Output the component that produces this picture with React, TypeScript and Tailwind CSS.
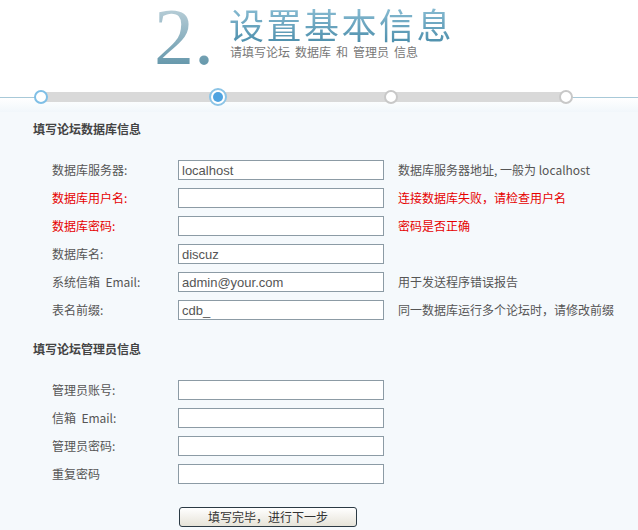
import React from "react";

const cjk = { fontFamily: '"Noto Sans CJK SC", "Noto Sans", sans-serif' };
const latin = { fontFamily: '"Liberation Sans", "Noto Sans CJK SC", sans-serif' };

type Row = { label: string; value?: string; hint?: string; error?: boolean };

const dbRows: Row[] = [
  { label: "数据库服务器:", value: "localhost", hint: "数据库服务器地址, 一般为 localhost" },
  { label: "数据库用户名:", error: true, hint: "连接数据库失败，请检查用户名" },
  { label: "数据库密码:", error: true, hint: "密码是否正确" },
  { label: "数据库名:", value: "discuz" },
  { label: "系统信箱  Email:", value: "admin@your.com", hint: "用于发送程序错误报告" },
  { label: "表名前缀:", value: "cdb_", hint: "同一数据库运行多个论坛时，请修改前缀" },
];

const adminRows: Row[] = [
  { label: "管理员账号:" },
  { label: "信箱  Email:" },
  { label: "管理员密码:" },
  { label: "重复密码" },
];

const FormRow = ({ row }: { row: Row }) => (
  <div className="flex items-center h-[28px] pl-[52px]">
    <div
      className={`w-[126px] text-[12px] whitespace-pre ${row.error ? "text-[#e60000]" : "text-[#555]"}`}
      style={cjk}
    >
      {row.label}
    </div>
    <input
      className="w-[206px] h-[20px] border border-[#8c9ba5] bg-white px-[3px] text-[13px] text-[#555] outline-none"
      style={latin}
      defaultValue={row.value ?? ""}
    />
    {row.hint && (
      <div
        className={`ml-[14px] text-[12px] ${row.error ? "text-[#e60000]" : "text-[#555]"}`}
        style={cjk}
      >
        {row.hint}
      </div>
    )}
  </div>
);

const Dot = ({ kind }: { kind: "done" | "active" | "todo" }) => {
  if (kind === "active")
    return (
      <div className="w-[18px] h-[18px] rounded-full bg-white border-2 border-[#8cc4e6] flex items-center justify-center">
        <div className="w-[10px] h-[10px] rounded-full bg-[#4fa3e0]" />
      </div>
    );
  return (
    <div
      className={`w-[14px] h-[14px] rounded-full bg-white border-2 ${
        kind === "done" ? "border-[#7fbfe6]" : "border-[#c8c8c8]"
      }`}
    />
  );
};

export default function App() {
  return (
    <div className="w-[638px] h-[530px] overflow-hidden bg-[#f5f9fc]" style={cjk}>
      {/* header */}
      <div className="h-[98px] bg-white flex pl-[154px]">
        <div
          className="text-[80px] leading-[74px] h-[80px] bg-gradient-to-b from-[#c4d6de] to-[#4f8aa0] bg-clip-text text-transparent"
          style={{ fontFamily: '"Liberation Serif", serif' }}
        >
          2.
        </div>
        <div className="ml-[15px] pt-[4px]">
          <div className="text-[35px] leading-[40px] tracking-[2.5px] bg-gradient-to-b from-[#8ec0d6] to-[#4b8eab] bg-clip-text text-transparent">
            设置基本信息
          </div>
          <div className="flex gap-[5px] mt-[1px] text-[12px] leading-[14px] text-[#777] ml-[1px]">
            <span>请填写论坛</span>
            <span>数据库</span>
            <span>和</span>
            <span>管理员</span>
            <span>信息</span>
          </div>
        </div>
      </div>

      {/* progress */}
      <div className="relative h-[14px] bg-gradient-to-b from-white to-[#f1f7fb]">
        <div className="absolute left-0 right-0 top-[-1px] h-px bg-[#a8c9d8]" />
        <div className="absolute left-[41px] w-[525px] top-[-6px] h-[10px] bg-[#d9d9d9]" />
        <div className="absolute left-[34px] top-[-8px]">
          <Dot kind="done" />
        </div>
        <div className="absolute left-[209px] top-[-10px]">
          <Dot kind="active" />
        </div>
        <div className="absolute left-[384px] top-[-8px]">
          <Dot kind="todo" />
        </div>
        <div className="absolute left-[559px] top-[-8px]">
          <Dot kind="todo" />
        </div>
      </div>

      {/* db section */}
      <div className="pl-[33px] pt-[10px] text-[12px] font-bold text-[#444] leading-[14px]">
        填写论坛数据库信息
      </div>
      <div className="mt-[20px]">
        {dbRows.map((r) => (
          <FormRow key={r.label} row={r} />
        ))}
      </div>

      {/* admin section */}
      <div className="pl-[33px] pt-[18px] text-[12px] font-bold text-[#444] leading-[14px]">
        填写论坛管理员信息
      </div>
      <div className="mt-[20px]">
        {adminRows.map((r) => (
          <FormRow key={r.label} row={r} />
        ))}
      </div>

      <div className="pl-[179px] mt-[15px]">
        <button className="w-[178px] h-[20px] rounded-[3px] border border-[#2b3a44] bg-gradient-to-b from-white to-[#e6e3d8] text-[12px] text-[#333] leading-[18px]">
          填写完毕，进行下一步
        </button>
      </div>
    </div>
  );
}
